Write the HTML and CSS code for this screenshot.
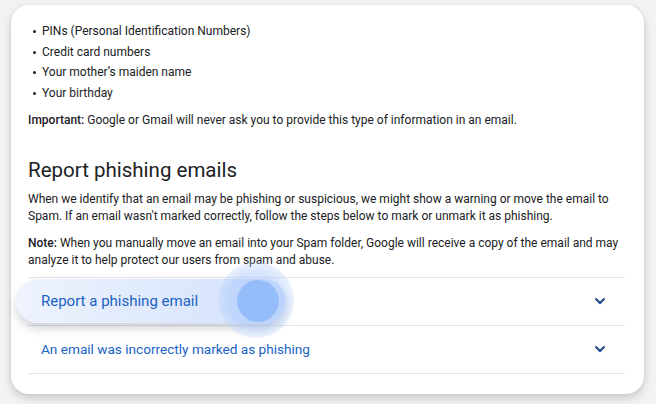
FILE: index.html
```html
<!DOCTYPE html>
<html lang="en">
<head>
<meta charset="utf-8">
<link rel="stylesheet" href="styles.css">
</head>
<body>
<div class="card">
  <ul class="list">
    <li>PINs (Personal Identification Numbers)</li>
    <li>Credit card numbers</li>
    <li>Your mother’s maiden name</li>
    <li>Your birthday</li>
  </ul>
  <p class="para"><b>Important:</b> Google or Gmail will never ask you to provide this type of information in an email.</p>
  <h2 class="heading">Report phishing emails</h2>
  <p class="para tight">When we identify that an email may be phishing or suspicious, we might show a warning or move the email to Spam. If an email wasn't marked correctly, follow the steps below to mark or unmark it as phishing.</p>
  <p class="para tight"><b>Note:</b> When you manually move an email into your Spam folder, Google will receive a copy of the email and may analyze it to help protect our users from spam and abuse.</p>
  <div class="accordion">
    <div class="row">
      <span class="row-title covered">Report a phishing email</span>
      <svg class="chev" width="14" height="10" viewBox="0 0 14 10"><path d="M2.5 2.5 L7 7 L11.5 2.5" fill="none" stroke="#1b4a8a" stroke-width="2"/></svg>
    </div>
    <div class="row">
      <span class="row-title">An email was incorrectly marked as phishing</span>
      <svg class="chev" width="14" height="10" viewBox="0 0 14 10"><path d="M2.5 2.5 L7 7 L11.5 2.5" fill="none" stroke="#1b4a8a" stroke-width="2"/></svg>
    </div>
  </div>
</div>
<div class="pill"><span class="pill-text">Report a phishing email</span></div>
<div class="halo"></div>
<div class="dot"></div>
</body>
</html>
```
FILE: styles.css
```css
html, body {
  margin: 0;
  padding: 0;
}
body {
  background: #f3f3f3;
  width: 656px;
  height: 404px;
  overflow: hidden;
  font-family: Roboto, "Liberation Sans", Arial, sans-serif;
  color: #202124;
  padding-top: 5px;
  box-sizing: border-box;
}
.card {
  margin: 0 12px 0 11px;
  height: 389px;
  box-sizing: border-box;
  background: #fff;
  border-radius: 18px;
  box-shadow: 0 4px 10px rgba(0,0,0,0.18), 0 0 3px rgba(0,0,0,0.06);
  padding: 16px 19px 0 17px;
}
.list {
  margin: 0;
  padding: 0 0 0 14px;
  font-size: 12px;
  line-height: 20.5px;
  list-style: none;
}
.list li {
  position: relative;
}
.list li::before {
  content: "";
  position: absolute;
  left: -9px;
  top: 9px;
  width: 3px;
  height: 3px;
  border-radius: 50%;
  background: #202124;
}
.para {
  margin: 9px 0 0;
  font-size: 12px;
  line-height: 17.5px;
}
.para b {
  font-weight: 500;
}
.para.tight {
  margin-top: 9px;
}
.heading {
  margin: 26px 0 0;
  font-size: 20.5px;
  font-weight: 400;
  line-height: 28px;
  color: #202124;
}
.heading + .para {
  margin-top: 7px;
}
.accordion {
  margin-top: 7px;
  border-top: 1px solid #e2e3e6;
}
.row {
  height: 47px;
  border-bottom: 1px solid #e2e3e6;
  display: flex;
  align-items: center;
  justify-content: space-between;
  padding: 0 18px 0 13px;
}
.row-title {
  font-size: 13.6px;
  color: #1a62c4;
}
.row-title.covered {
  visibility: hidden;
}
.chev {
  display: block;
}
.pill {
  position: absolute;
  left: 16px;
  top: 279px;
  width: 270px;
  height: 44px;
  border-radius: 22px;
  background: linear-gradient(90deg, #eef3fd 0%, #dde8fc 60%, #cfe0fd 100%);
  box-shadow: 0 6px 8px rgba(60,70,90,0.22);
  display: flex;
  align-items: center;
  padding-left: 25px;
  box-sizing: border-box;
}
.pill-text {
  font-size: 15px;
  color: #1a62c4;
}
.halo {
  position: absolute;
  left: 218px;
  top: 262px;
  width: 76px;
  height: 76px;
  border-radius: 50%;
  background: radial-gradient(circle, rgba(170,200,250,0.5) 50%, rgba(195,215,250,0.3) 72%, rgba(215,228,252,0) 100%);
}
.dot {
  position: absolute;
  left: 237px;
  top: 280px;
  width: 42px;
  height: 42px;
  border-radius: 50%;
  background: #95bdfa;
}
```
